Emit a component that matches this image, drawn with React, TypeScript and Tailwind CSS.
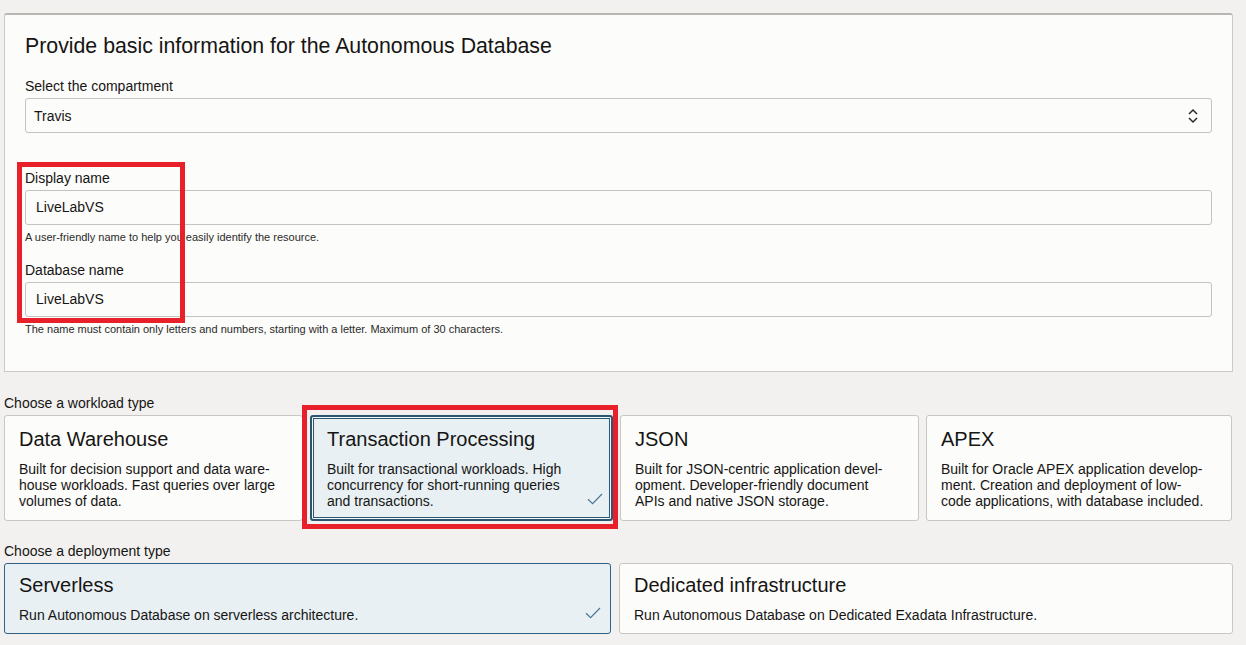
import React from "react";

const font = { fontFamily: '"Liberation Sans", Arial, sans-serif' };

function Check() {
  return (
    <svg width="16" height="12" viewBox="0 0 16 12" fill="none">
      <path d="M1 6.2 L5.6 10.6 L15 1" stroke="#4a7696" strokeWidth="1.2" />
    </svg>
  );
}

function Field({ label, value, help }: { label: string; value: string; help?: string }) {
  return (
    <div className="flex flex-col">
      <div className="text-[14px] leading-4 text-[#161513]">{label}</div>
      <div className="mt-[4px] h-[35px] rounded-[3px] border border-[#c5c2bf] bg-[#fcfcfb] flex items-center pl-[10px] text-[14px] text-[#161513]">
        {value}
      </div>
      {help && <div className="mt-[6px] text-[11px] leading-3 text-[#2b2a28]">{help}</div>}
    </div>
  );
}

function WorkCard({ title, desc, selected, annotate }: { title: string; desc: string[]; selected?: boolean; annotate?: boolean }) {
  return (
    <div className="relative">
      <div
        className={
          "relative h-[106px] rounded-[3px] pr-3 " +
          (selected
            ? "pl-[15px] pt-[10px] border-2 border-[#2c5571] bg-[#e8f0f4] shadow-[inset_0_0_0_1px_#f4f8fa,inset_0_0_0_2px_#2c5571]"
            : "pl-[14px] pt-[11px] border border-[#c9c6c3] bg-[#fcfcfb]")
        }
      >
        <div className="text-[20px] leading-6 text-[#161513]">{title}</div>
        <div className="mt-[10px] text-[14px] leading-4 text-[#161513]">
          {desc.map((d, i) => (
            <div key={i}>{d}</div>
          ))}
        </div>
        {selected && (
          <div className="absolute right-[8px] bottom-[14px]">
            <Check />
          </div>
        )}
      </div>
      {annotate && (
        <div className="pointer-events-none absolute left-[-8px] top-[-10px] right-[-5px] bottom-[-8px] border-[5px] border-[#e8202a]" />
      )}
    </div>
  );
}

function DeployCard({ title, desc, selected }: { title: string; desc: string; selected?: boolean }) {
  return (
    <div
      className={
        "relative h-[71px] rounded-[3px] border pl-[14px] pt-[9px] " +
        (selected ? "border-[#2f6289] bg-[#e8f0f4]" : "border-[#c9c6c3] bg-[#fcfcfb]")
      }
    >
      <div className="text-[20px] leading-6 text-[#161513]">{title}</div>
      <div className="mt-[10px] text-[14px] leading-4 text-[#161513]">{desc}</div>
      {selected && (
        <div className="absolute right-[9px] bottom-[14px]">
          <Check />
        </div>
      )}
    </div>
  );
}

export default function App() {
  return (
    <div style={font} className="min-h-[645px] w-[1246px] bg-[#f2f1f0] pl-[4px] pr-[13px] pt-[13px] overflow-hidden">
      <div className="relative rounded-t-[3px] border border-t-2 border-[#ccc9c6] border-t-[#b9b5b1] bg-[#fcfcfb] pl-5 pr-5 pt-[19px] h-[359px]">
        <div className="text-[21.3px] leading-[25px] text-[#161513]">Provide basic information for the Autonomous Database</div>
        <div className="mt-[19px] text-[14px] leading-4 text-[#161513]">Select the compartment</div>
        <div className="mt-[4px] h-[35px] rounded-[3px] border border-[#c5c2bf] bg-[#fcfcfb] flex items-center justify-between pl-[8px] pr-[12px] text-[14px] text-[#161513]">
          <span className="pt-[1px]">Travis</span>
          <svg width="12" height="16" viewBox="0 0 12 16" fill="none">
            <path d="M2 6 L6 2 L10 6" stroke="#2b2a28" strokeWidth="1.5" />
            <path d="M2 10 L6 14 L10 10" stroke="#2b2a28" strokeWidth="1.5" />
          </svg>
        </div>
        <div className="mt-[37px] flex flex-col gap-[19px]">
          <Field label="Display name" value="LiveLabVS" help="A user-friendly name to help you easily identify the resource." />
          <Field
            label="Database name"
            value="LiveLabVS"
            help="The name must contain only letters and numbers, starting with a letter. Maximum of 30 characters."
          />
        </div>
        <div className="pointer-events-none absolute left-[12px] top-[147px] w-[168px] h-[161px] border-[5px] border-[#e8202a]" />
      </div>

      <div className="mt-[23px] text-[14px] leading-4 text-[#161513]">Choose a workload type</div>
      <div className="mt-[4px] grid grid-cols-[299px_303px_299px_306px] gap-[7px]">
        <WorkCard
          title="Data Warehouse"
          desc={["Built for decision support and data ware-", "house workloads. Fast queries over large", "volumes of data."]}
        />
        <WorkCard
          title="Transaction Processing"
          desc={["Built for transactional workloads. High", "concurrency for short-running queries", "and transactions."]}
          selected
          annotate
        />
        <WorkCard
          title="JSON"
          desc={["Built for JSON-centric application devel-", "opment. Developer-friendly document", "APIs and native JSON storage."]}
        />
        <WorkCard
          title="APEX"
          desc={["Built for Oracle APEX application develop-", "ment. Creation and deployment of low-", "code applications, with database included."]}
        />
      </div>

      <div className="mt-[22px] text-[14px] leading-4 text-[#161513]">Choose a deployment type</div>
      <div className="mt-[4px] grid grid-cols-[607px_1fr] gap-2">
        <DeployCard title="Serverless" desc="Run Autonomous Database on serverless architecture." selected />
        <DeployCard title="Dedicated infrastructure" desc="Run Autonomous Database on Dedicated Exadata Infrastructure." />
      </div>
    </div>
  );
}
